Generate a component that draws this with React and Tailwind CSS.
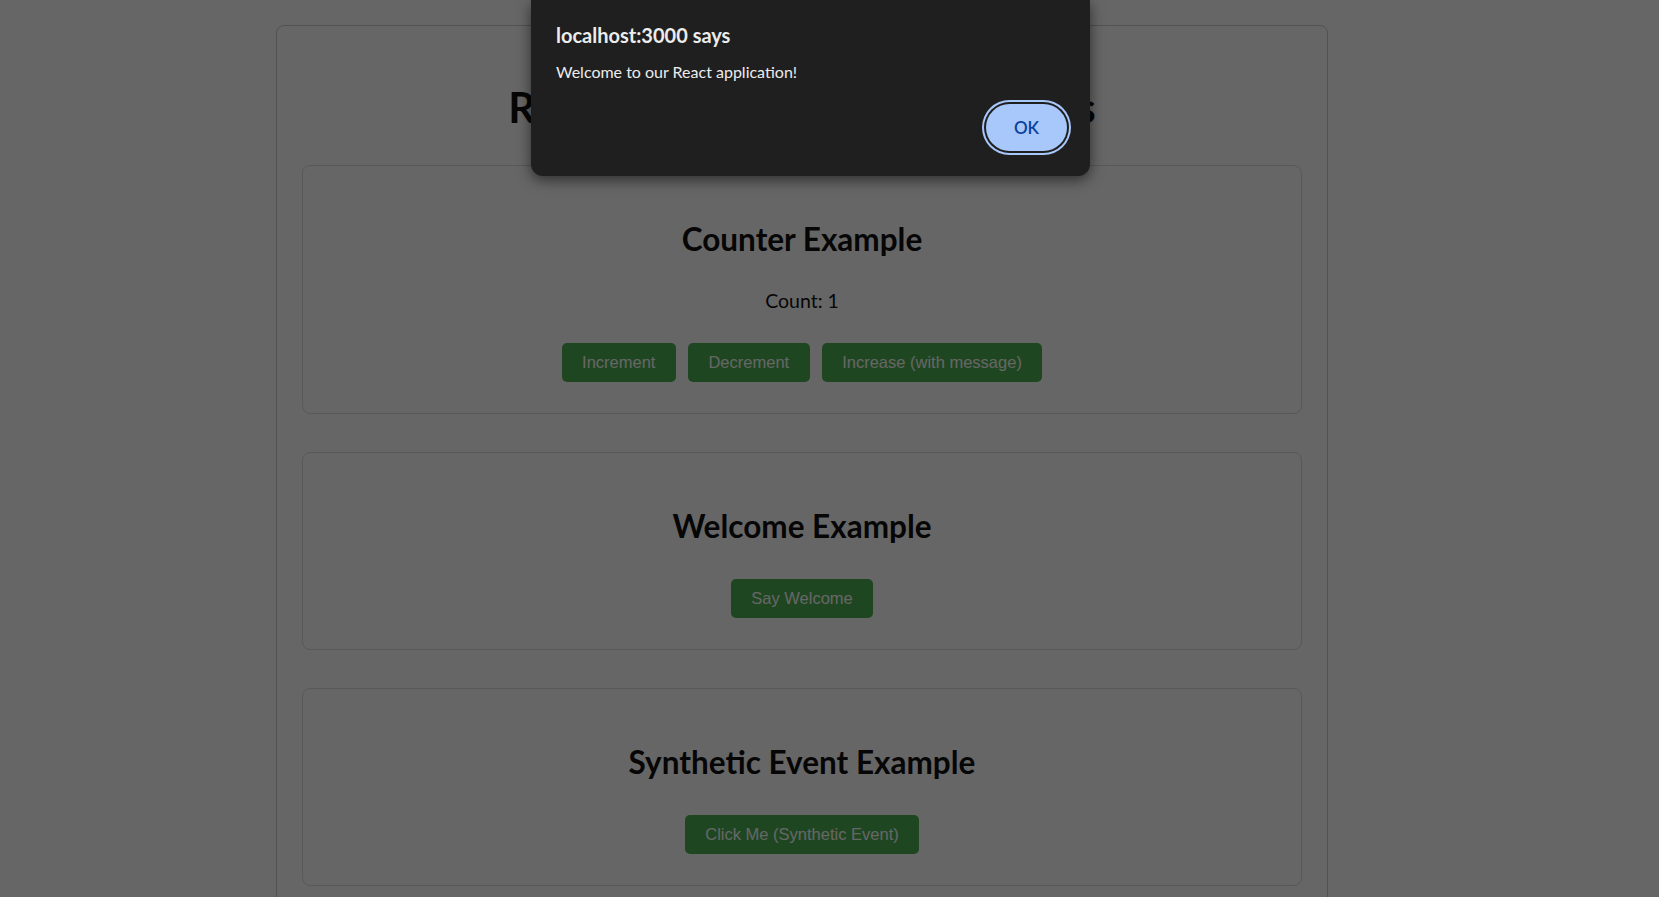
import React from "react";

const heading = "font-['Lato','Noto_Sans',sans-serif]";
const btn =
  "h-[39px] rounded-[5px] bg-[#4CAF50] px-[20.5px] text-[16.5px] leading-none text-white font-['Liberation_Sans',Arial,sans-serif]";

function Card({ title, children, mt }) {
  return (
    <section
      className={`w-full rounded-lg border border-[#dddddd] px-5 pt-[57px] pb-[31px] text-center ${mt}`}
    >
      <h2 className={`${heading} text-[31.5px] font-bold leading-[32px] text-[#111]`}>{title}</h2>
      {children}
    </section>
  );
}

export default function App() {
  return (
    <div className="relative h-[897px] w-full overflow-hidden bg-white">
      <div className="pl-[276px] pt-[25px]">
        <div className="w-[1052px] rounded-lg border border-[#cccccc] px-[25px] pt-[25px] pb-[25px]">
          <h1
            className={`${heading} mt-[35px] text-center text-[42px] font-bold leading-[42px] text-[#111]`}
          >
            React Event Handling Examples
          </h1>

          <Card title="Counter Example" mt="mt-[37px]">
            <p className={`${heading} mt-[36px] text-[19.5px] leading-[20px] text-[#111]`}>Count: 1</p>
            <div className="mt-[32px] flex justify-center gap-3">
              <button className={btn}>Increment</button>
              <button className={btn}>Decrement</button>
              <button className={btn}>Increase (with message)</button>
            </div>
          </Card>

          <Card title="Welcome Example" mt="mt-[38px]">
            <div className="mt-[37px] flex justify-center">
              <button className={btn}>Say Welcome</button>
            </div>
          </Card>

          <Card title="Synthetic Event Example" mt="mt-[38px]">
            <div className="mt-[37px] flex justify-center">
              <button className={btn}>Click Me (Synthetic Event)</button>
            </div>
          </Card>
        </div>
      </div>

      <div className="absolute inset-0 bg-black/60" />

      <div
        className={`${heading} absolute left-[531px] top-0 w-[559px] rounded-b-[12px] bg-[#1f1f1f] pl-[25px] pr-[23px] pt-[25px] pb-[25px] shadow-[0_4px_14px_rgba(0,0,0,0.55)]`}
      >
        <div className="text-[20px] font-bold leading-[20px] text-[#ececec]">localhost:3000 says</div>
        <div className="mt-[19px] text-[16px] leading-[16px] text-[#ececec]">
          Welcome to our React application!
        </div>
        <div className="mt-[24px] flex justify-end">
          <button className="h-[47px] w-[81px] rounded-full bg-[#a8c7fa] text-[17px] font-semibold text-[#0842a0] shadow-[0_0_0_2px_#1f1f1f,0_0_0_4px_#a8c7fa]">
            OK
          </button>
        </div>
      </div>
    </div>
  );
}
